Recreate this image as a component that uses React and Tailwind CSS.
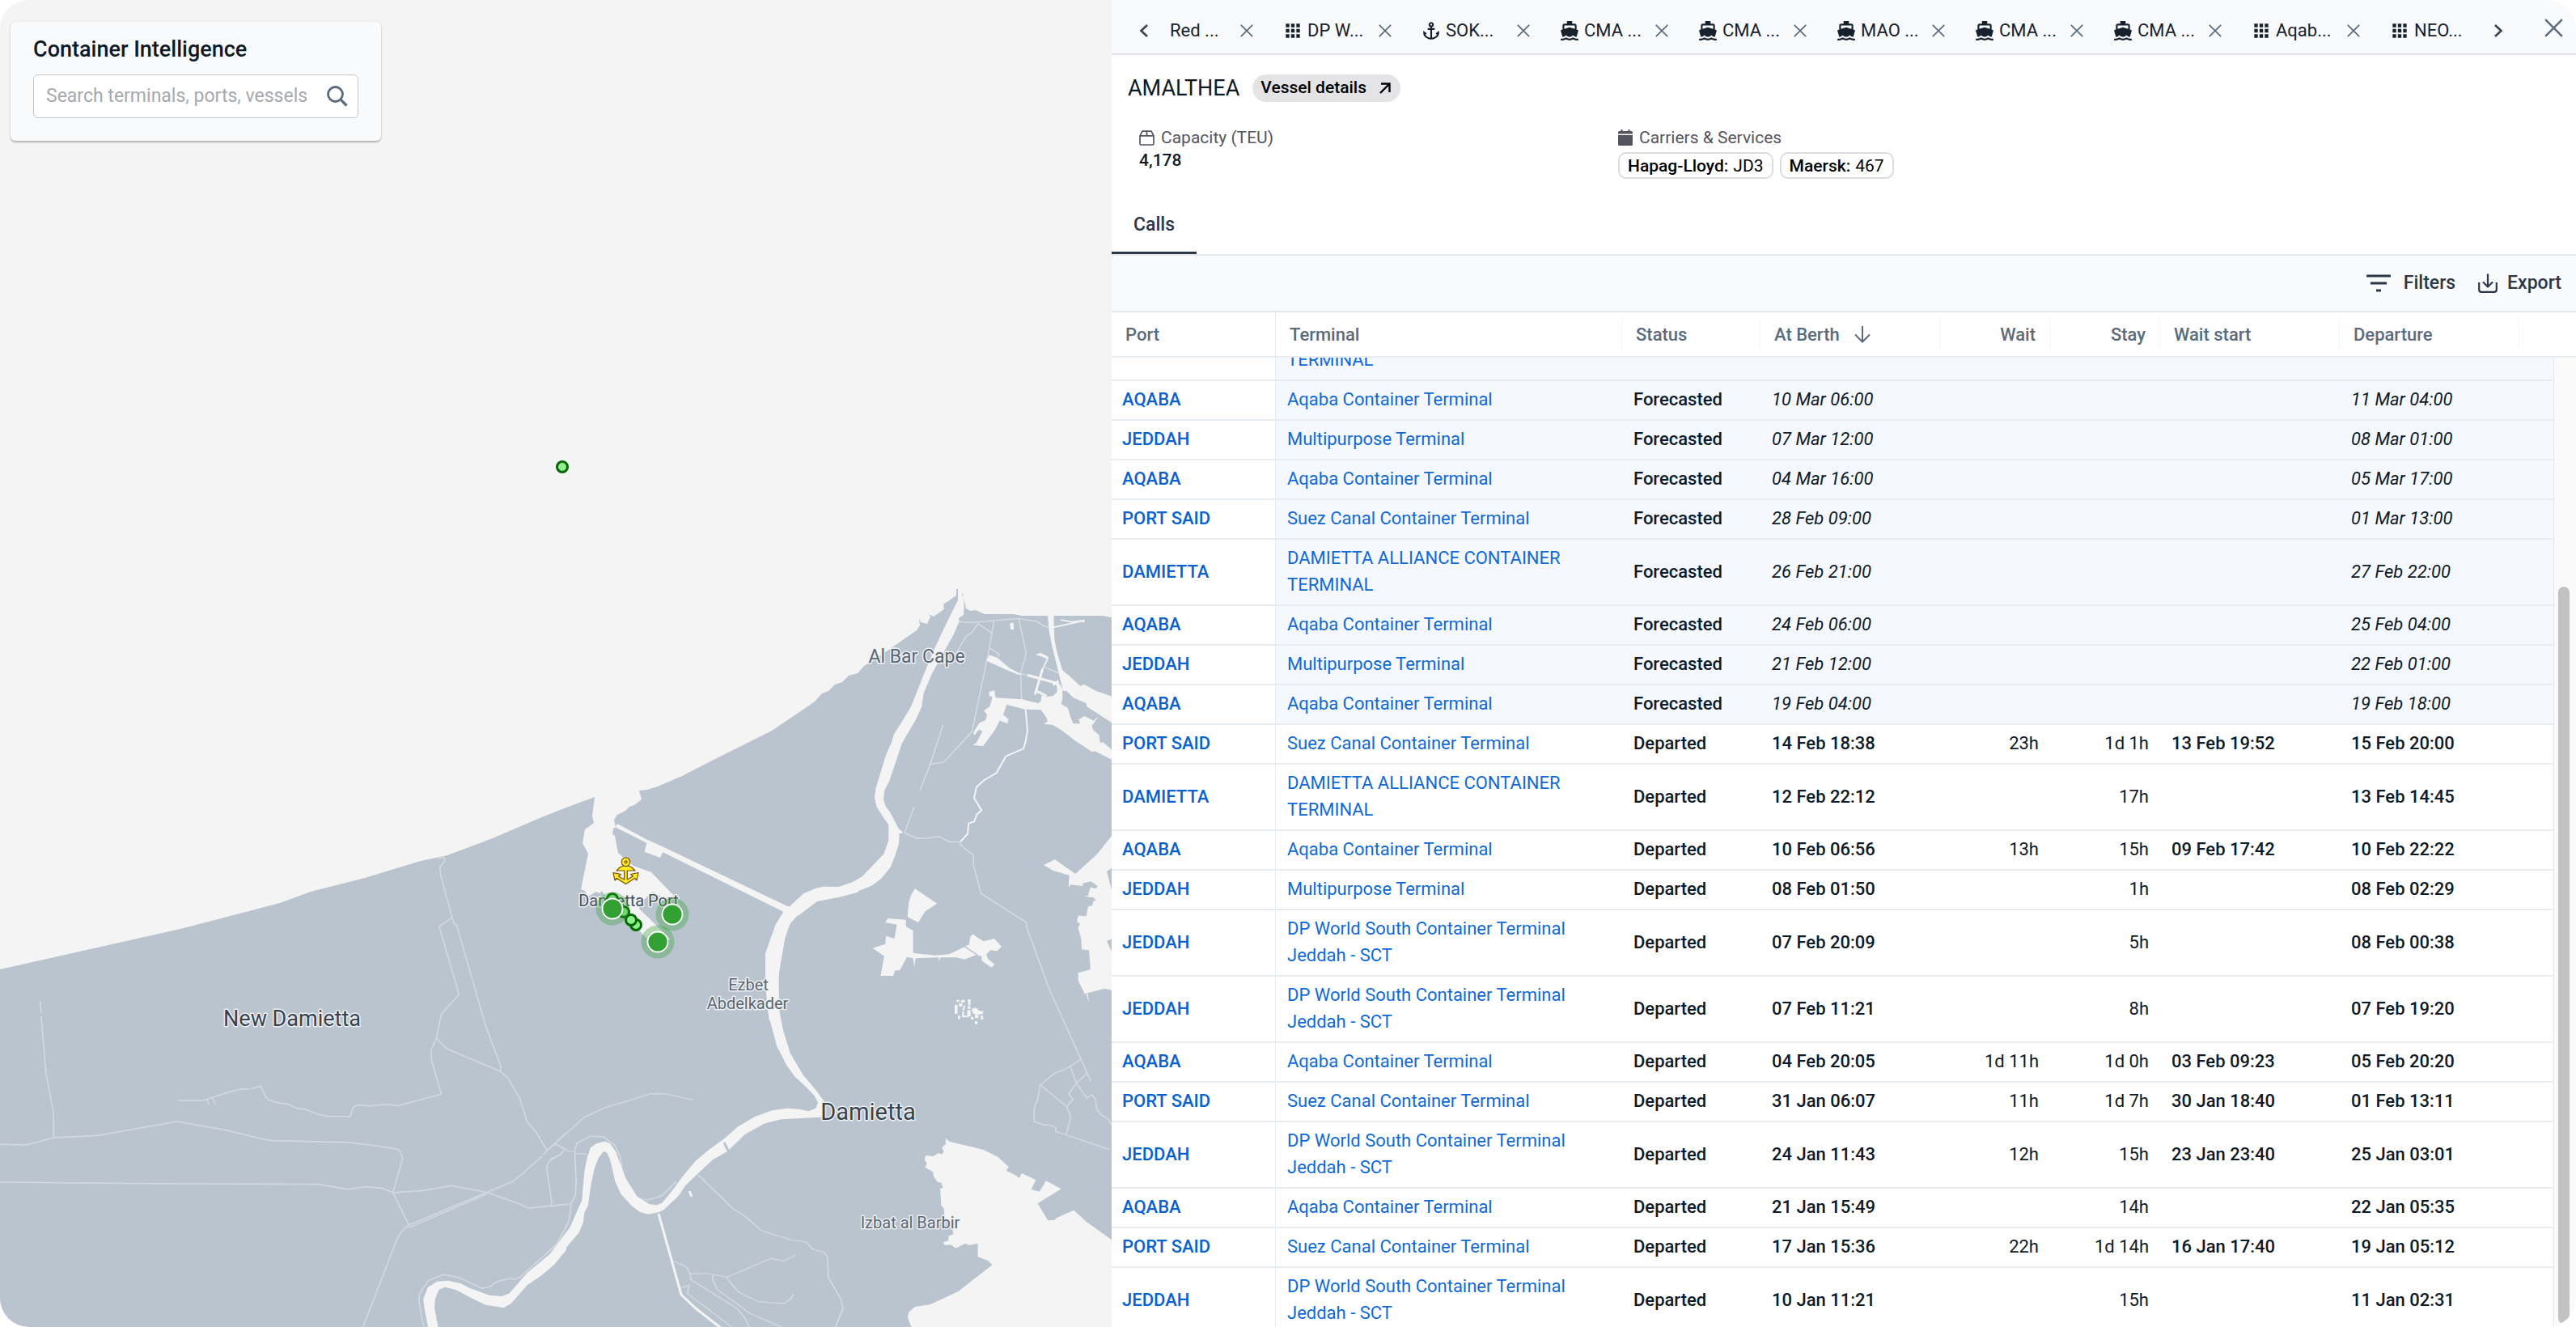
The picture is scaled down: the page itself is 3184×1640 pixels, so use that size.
import React, { useLayoutEffect, useRef, useState } from 'react';
import { MdApps, MdAnchor, MdDirectionsBoat } from 'react-icons/md';

const tabs = [
  { label: 'Red ...' },
  { label: 'DP W...', icon: 'terminal' },
  { label: 'SOK...', icon: 'port' },
  { label: 'CMA ...', icon: 'vessel' },
  { label: 'CMA ...', icon: 'vessel' },
  { label: 'MAO ...', icon: 'vessel' },
  { label: 'CMA ...', icon: 'vessel' },
  { label: 'CMA ...', icon: 'vessel' },
  { label: 'Aqab...', icon: 'terminal' },
  { label: 'NEO...', icon: 'terminal', last: true },
];

const tabIcons = { terminal: MdApps, port: MdAnchor, vessel: MdDirectionsBoat };

const ACT = 'Aqaba Container Terminal';
const MPT = 'Multipurpose Terminal';
const SCCT = 'Suez Canal Container Terminal';
const DACT = 'DAMIETTA ALLIANCE CONTAINER TERMINAL';
const SCT = 'DP World South Container Terminal Jeddah - SCT';

// port, terminal, status, at berth, wait, stay, wait start, departure
const calls = [
  ['', 'TERMINAL', '', '', '', '', '', ''],
  ['AQABA', ACT, 'Forecasted', '10 Mar 06:00', '', '', '', '11 Mar 04:00'],
  ['JEDDAH', MPT, 'Forecasted', '07 Mar 12:00', '', '', '', '08 Mar 01:00'],
  ['AQABA', ACT, 'Forecasted', '04 Mar 16:00', '', '', '', '05 Mar 17:00'],
  ['PORT SAID', SCCT, 'Forecasted', '28 Feb 09:00', '', '', '', '01 Mar 13:00'],
  ['DAMIETTA', DACT, 'Forecasted', '26 Feb 21:00', '', '', '', '27 Feb 22:00'],
  ['AQABA', ACT, 'Forecasted', '24 Feb 06:00', '', '', '', '25 Feb 04:00'],
  ['JEDDAH', MPT, 'Forecasted', '21 Feb 12:00', '', '', '', '22 Feb 01:00'],
  ['AQABA', ACT, 'Forecasted', '19 Feb 04:00', '', '', '', '19 Feb 18:00'],
  ['PORT SAID', SCCT, 'Departed', '14 Feb 18:38', '23h', '1d 1h', '13 Feb 19:52', '15 Feb 20:00'],
  ['DAMIETTA', DACT, 'Departed', '12 Feb 22:12', '', '17h', '', '13 Feb 14:45'],
  ['AQABA', ACT, 'Departed', '10 Feb 06:56', '13h', '15h', '09 Feb 17:42', '10 Feb 22:22'],
  ['JEDDAH', MPT, 'Departed', '08 Feb 01:50', '', '1h', '', '08 Feb 02:29'],
  ['JEDDAH', SCT, 'Departed', '07 Feb 20:09', '', '5h', '', '08 Feb 00:38'],
  ['JEDDAH', SCT, 'Departed', '07 Feb 11:21', '', '8h', '', '07 Feb 19:20'],
  ['AQABA', ACT, 'Departed', '04 Feb 20:05', '1d 11h', '1d 0h', '03 Feb 09:23', '05 Feb 20:20'],
  ['PORT SAID', SCCT, 'Departed', '31 Jan 06:07', '11h', '1d 7h', '30 Jan 18:40', '01 Feb 13:11'],
  ['JEDDAH', SCT, 'Departed', '24 Jan 11:43', '12h', '15h', '23 Jan 23:40', '25 Jan 03:01'],
  ['AQABA', ACT, 'Departed', '21 Jan 15:49', '', '14h', '', '22 Jan 05:35'],
  ['PORT SAID', SCCT, 'Departed', '17 Jan 15:36', '22h', '1d 14h', '16 Jan 17:40', '19 Jan 05:12'],
  ['JEDDAH', SCT, 'Departed', '10 Jan 11:21', '', '15h', '', '11 Jan 02:31'],
];

const Cross = ({ className }) => (
  <svg viewBox="0 0 16 16" className={className} fill="none" stroke="currentColor" strokeWidth="1.7">
    <path d="M0.8 0.8 L15.2 15.2 M15.2 0.8 L0.8 15.2" />
  </svg>
);

const Chevron = ({ flip }) => (
  <svg viewBox="0 0 12 18" className="w-3 h-[18px]" fill="none" stroke="currentColor" strokeWidth="2.6">
    <path d={flip ? 'M2 2 L9.5 9 L2 16' : 'M10 2 L2.5 9 L10 16'} />
  </svg>
);

const MapLabel = ({ x, y, size, color = '#5c6671', weight = 400, children }) => (
  <text x={x} y={y} fontSize={size} fill={color} fontWeight={weight} textAnchor="middle" stroke="#eef1f4" strokeWidth="3" strokeLinejoin="round" paintOrder="stroke">
    {children}
  </text>
);

const Berth = ({ x, y }) => (
  <g>
    <circle cx={x} cy={y} r="20.5" fill="#2f9e2f" opacity="0.33" />
    <circle cx={x} cy={y} r="12.5" fill="#33a033" stroke="#fff" strokeWidth="1.8" />
  </g>
);

const ShipDot = ({ x, y }) => (
  <circle cx={x} cy={y} r="6.5" fill="#90ee90" stroke="#006a00" strokeWidth="3" />
);

const MapView = () => (
  <svg viewBox="0 0 1374 1640" preserveAspectRatio="xMidYMid slice" className="block w-full h-full" fontFamily="Roboto, sans-serif" role="img" aria-label="Map of Damietta">
    <rect width="1374" height="1640" fill="#f4f4f4" />
    <path fill="#b9c4ce" d="M0 1198 L223 1148 L346 1116 L384 1102 L451 1085 L520 1064 L553 1057 L609 1036 L667 1011 L700 998 L735 985 L732 1008 L734 1017 L723 1025 L720 1042 L727 1055 L718 1099 L723 1101 L727 1108 L737 1102 L741 1104 L744 1101 L750 1110 L764 1123 L790 1150 L807 1167 L829 1161 L790 1123 L796 1112 L807 1102 L820 1110 L833 1107 L805 1078 L783 1070 L764 1054 L760 1033 L757 1031 L758 1024 L761 1022 L759 1013 L763 1007 L773 1002 L778 997 L784 995 L793 988 L790 977 L800 976 L813 972 L843 959 L880 940 L920 920 L954 903 L1000 872 L1007 867 L1016 857 L1024 854 L1032 846 L1041 843 L1049 835 L1060 832 L1068 823 L1080 816 L1110 795 L1133 779 L1137 773 L1136 765 L1138 769 L1146 771 L1150 762 L1148 759 L1154 762 L1167 753 L1166 747 L1182 736 L1182 728 L1184 728 L1184 742 L1190 733 L1194 752 L1200 755 L1206 754 L1217 759 L1253 759 L1263 761 L1295 761 L1363 761 L1374 763 L1374 1640 L0 1640 Z" />

    {/* south-west roads */}
    <g transform="translate(0 940) scale(0.4464)" fill="none" stroke="#d3d9e0" strokeWidth="3.6">
      <path d="M111 666 L114 698 M114 708 L127 862 L148 974 L149 1043" />
      <path d="M0 1062 L72 1064 L149 1044 L270 1038 L490 999 L630 1024 L720 1046 L752 1052 L965 1057 L1025 1064 L1100 1076 L1108 1083 L1115 1101 L1088 1196 L1132 1286 L1112 1303 L1098 1328 L1005 1568" />
      <path d="M0 1167 L410 1171 L886 1173 L960 1187 L1012 1180 L1055 1183 L1088 1196 L1167 1191 L1250 1177 L1347 1195 L1432 1225 L1464 1239 L1568 1228" />
      <path d="M1132 1286 L1420 1165 L1436 1153 L1500 1096 M1132 1293 L1347 1200 M1504 1090 L1568 1030 M1538 1062 L1568 1077" />
      <path d="M494 941 L562 941 L638 916 L668 909 L690 910 M694 909 L722 901 L736 931 L743 939 L767 947 L796 951 L825 963 L848 966 L880 979 L908 985 L970 985 L978 960 L988 954 L1025 956 L1073 951 L1101 956 L1222 923 L1195 830 L1193 804 L1208 768 L1222 702 L1271 647 L1216 459 L1252 435" />
      <path d="M573 937 L579 953 M588 933 L596 952" />
      <path d="M1213 271 L1228 267 L1232 277 L1218 295 L1220 318 L1257 452 L1264 455 L1345 735 L1387 848 L1386 861 L1407 880 L1440 937 L1459 999 L1485 1030 L1515 1080" />
      <path d="M1208 768 L1236 797 L1386 861" />
      <path d="M1560 1080 L1553 1090 L1527 1102 L1516 1118 L1514 1133 L1528 1222 L1525 1233" />
      <path d="M1568 1290 L1541 1340 L1440 1430 L1427 1436 L1407 1434 L1371 1445 L1358 1456 L1335 1461 L1267 1430 L1227 1423 L1187 1439 L1163 1473 L1160 1490 L1167 1540 L1174 1568" />
    </g>

    {/* south-east roads */}
    <g transform="translate(680 1140) scale(0.4464 0.3333)" fill="none" stroke="#d3d9e0" strokeWidth="4">
      <path d="M0 836 L95 722 L150 688 L278 635 L320 636 L396 658" />
      <path d="M15 822 L52 848 L68 849 L74 818 L113 792 L148 795 L180 828 L195 872 L198 920" />
      <path d="M68 849 L72 960 L70 1012 L58 1043 L0 1053 M68 856 L103 859 M0 882 L30 860 L37 845 M58 1043 L53 1105 L20 1190 L0 1213" />
      <path d="M255 1026 L272 1029 L310 1013 L350 960" />
      <path d="M410 936 L507 1062 L543 1092 L585 1143 L668 1177 L708 1185 L727 1211 L757 1223 L768 1240 L770 1315 L805 1397 L811 1432 L790 1500" />
      <path d="M340 1255 L378 1277 L388 1303 L435 1301 L490 1315 L612 1246 L648 1255 L680 1233" />
      <path d="M388 1303 L390 1325 L518 1432 L540 1468 L550 1500 M452 1306 L449 1322 L463 1361 L553 1450 L640 1500" />
      <path d="M487 1315 L522 1371 L578 1407 L648 1413 L665 1398 L675 1378 M360 1357 L385 1345 L380 1376 L503 1500" />
      <path d="M1318 0 L1320 20 L1382 248 L1470 508 L1497 588 M1470 508 L1422 547 L1400 557 L1357 602 L1350 655 L1340 690 L1340 738 L1365 750 L1378 750 L1400 760 L1400 775 L1550 843" />
      <path d="M1357 602 L1430 682 L1441 720 L1438 743 L1428 787 M1440 534 L1457 595 L1485 652 L1500 640 L1510 655 L1513 693 L1525 712 L1545 730 L1555 752 M1487 558 L1457 597 L1436 635 L1448 656 L1430 682" />
    </g>

    {/* north-east roads */}
    <g transform="translate(1000 700) scale(0.3333)" fill="none" stroke="#d9dfe5" strokeWidth="4">
      <path d="M555 204 L590 208 L627 206 L778 193 L845 204 L870 221 L890 226" />
      <path d="M627 212 L603 245 L582 260 L545 322 M627 212 L677 247 M686 203 L665 320 L604 613 L500 726 L450 733" />
      <path d="M778 193 L805 322 L785 398 L788 495 M785 398 L810 403 M668 302 L705 325 L700 337 M872 373 L925 395" />
      <path d="M497 587 L450 733 L412 830 M390 891 L354 988 L400 1008 L448 1007 L480 1001 L520 1021 L560 1022 L562 1034 L610 1071 L610 1108 L638 1213 L806 1320" />
      <path stroke="#f4f4f4" strokeWidth="6" d="M803 530 L810 608 L803 650 L795 676 L730 704 L695 766 L650 792 L621 818 L612 858 L640 905 L622 920 L613 946 L592 953 L588 992 L562 1020" />
    </g>

    {/* Nile */}
    <g fill="#f4f4f4">
      <path transform="translate(1000 700) scale(0.3333)" d="M552 125 L525 180 L500 230 L465 305 L430 390 L400 465 L378 520 L345 575 L315 622 L305 655 L285 700 L265 765 L247 825 L243 855 L250 890 L275 930 L295 958 L295 1015 L278 1065 L240 1105 L197 1150 L145 1180 L110 1190 L55 1187 L25 1193 L-2 1205 L-2 1258 L30 1240 L100 1225 L160 1213 L235 1183 L270 1155 L302 1115 L320 1070 L333 1030 L335 990 L350 988 L332 972 L300 910 L285 892 L276 865 L280 830 L298 795 L320 730 L345 655 L395 570 L418 520 L425 470 L455 400 L490 335 L535 255 L557 205 L555 192 L573 180 L575 150 L575 110 L556 100 Z" />
      <path transform="translate(640 940) scale(0.3333)" d="M1084 483 L1060 492 L1010 540 L1000 540 L540 320 L480 293 L370 235 L362 247 L478 305 L470 338 L528 360 L538 340 L985 560 L955 610 L940 660 L918 715 L918 830 L925 900 L932 962 L973 962 L967 900 L967 820 L972 750 L985 690 L990 655 L1010 605 L1050 560 L1084 535 Z" />
      <path transform="translate(640 940) scale(0.3333)" d="M1262 443 L1190 468 L1140 467 L1100 480 L1050 505 L1010 540 L1040 575 L1110 522 L1190 507 L1262 488 Z" />
      <path transform="translate(680 1140) scale(0.4464 0.3333)" d="M628 0 L610 60 L597 115 L597 200 L602 260 L608 360 L628 460 L655 530 L678 572 L705 605 L730 640 L742 668 L735 690 L715 700 L690 692 L655 689 L615 697 L567 720 L520 757 L482 802 L440 842 L402 885 L365 945 L335 1000 L310 1040 L295 1048 L275 1045 L240 1015 L210 950 L190 880 L182 850 L165 818 L150 812 L128 820 L112 835 L103 870 L95 920 L88 1030 L55 1130 L-2 1232 L-2 1284 L35 1220 L80 1150 L92 1110 L95 1075 L105 1050 L112 980 L122 915 L133 875 L148 848 L158 855 L166 880 L180 960 L195 1005 L225 1050 L248 1073 L272 1082 L300 1075 L315 1065 L355 1015 L375 975 L410 930 L450 880 L490 850 L540 785 L595 745 L640 730 L750 722 L765 690 L757 660 L735 620 L700 565 L665 485 L645 400 L635 330 L632 200 L650 60 L665 0 Z" />
      <path transform="translate(0 940) scale(0.4464)" d="M1568 1310 L1523 1366 L1500 1385 L1460 1418 L1410 1475 L1390 1483 L1355 1480 L1300 1460 L1275 1447 L1240 1440 L1210 1442 L1185 1458 L1172 1490 L1174 1510 L1185 1568 L1213 1568 L1203 1515 L1205 1490 L1215 1465 L1232 1458 L1262 1465 L1300 1485 L1345 1507 L1395 1515 L1415 1503 L1460 1452 L1500 1425 L1535 1395 L1568 1355 Z" />
    </g>
    <path d="M895 1412 L901 1424" stroke="#b9c4ce" strokeWidth="3" />
    <path d="M814 1500 L842 1600 L860 1617 L892 1642" fill="none" stroke="#f4f4f4" strokeWidth="3" />
    <path d="M852 1472 L855 1479" stroke="#f4f4f4" strokeWidth="3" />

    {/* lagoons around the cape */}
    <g transform="translate(1000 700) scale(0.3333)" fill="#f4f4f4">
      <path d="M885 178 L907 178 L910 270 L920 320 L940 385 L970 410 L1005 443 L1020 437 L1065 462 L1124 482 L1124 580 L1030 520 L1028 508 L980 487 L955 462 L942 462 L932 420 L912 340 L900 290 L890 240 Z" />
      <path d="M668 465 L688 460 L692 487 L790 493 L850 507 L860 500 L862 478 L885 483 L905 480 L920 465 L920 450 L912 425 L925 430 L940 455 L940 490 L935 510 L960 525 L968 555 L980 583 L1005 583 L1000 567 L1022 555 L1055 572 L1075 555 L1048 592 L1055 608 L1075 625 L1080 655 L1090 652 L1124 680 L1124 717 L1060 685 L1050 688 L985 645 L940 610 L905 588 L870 584 L885 575 L880 560 L860 532 L800 530 L733 512 L720 550 L740 567 L735 582 L707 572 L690 605 L645 667 L607 662 L620 655 L643 612 L630 605 L612 627 L610 615 L632 580 L655 570 L660 550 L648 535 L670 520 L680 485 L668 480 Z" />
      <path d="M668 328 L700 340 L745 378 L785 398 L780 403 L735 385 L658 350 Z" />
      <path d="M744 212 L758 208 L760 234 L748 234 Z M840 328 L858 320 L888 335 L885 345 L865 335 Z" />
      <path d="M905 226 L1016 202 M932 198 L975 206 L1020 200 L1018 208 M886 340 L865 382" stroke="#f4f4f4" strokeWidth="5" fill="none" />
      <path d="M866 380 L838 475 M810 403 L918 433 M840 460 L880 480 M905 440 L925 425" stroke="#f4f4f4" strokeWidth="9" fill="none" />
      <path d="M870 1107 L912 1087 L988 1140 L1010 1120 L1070 1065 L1124 997 L1124 1322 L995 1322 L995 1305 L1000 1295 L1028 1298 L1035 1262 L1050 1258 L1055 1240 L1065 1240 L1055 1228 L1020 1223 L1035 1220 L1043 1190 L1065 1195 L1070 1185 L1045 1168 L1015 1175 L1015 1185 L970 1180 L962 1192 L965 1145 L905 1128 Z" />
      <path d="M393 1195 L475 1250 L430 1280 L405 1320 L365 1300 L370 1245 L380 1215 Z" />
    </g>
    <path d="M1368 1077 L1374 1073 L1374 1100 Z" fill="#b9c4ce" />

    {/* fish farms and southern lake */}
    <g transform="translate(680 1140) scale(0.4464 0.3333)" fill="#f4f4f4">
      <path d="M928 0 L935 -15 L985 -10 L985 15 L1005 30 L1005 113 L1065 122 L1105 118 L1145 92 L1160 82 L1163 55 L1170 43 L1185 58 L1200 70 L1230 60 L1250 90 L1238 106 L1220 103 L1208 118 L1212 135 L1231 156 L1222 167 L1195 142 L1195 125 L1180 120 L1148 137 L1125 130 L1080 130 L1078 145 L1075 130 L1012 133 L1008 165 L1005 133 L988 128 L968 178 L955 178 L950 198 L915 198 L925 125 L893 95 L928 80 L930 50 L953 60 L960 8 Z" />
      <path d="M1146 88 L1182 120" stroke="#b9c4ce" strokeWidth="4" />
      <path d="M1470 -5 L1462 20 L1470 60 L1472 100 L1492 103 L1496 175 L1462 187 L1462 215 L1480 265 L1535 245 L1556 252 L1556 -5 Z M1485 265 L1492 300 L1489 265 Z" />
      <path d="M1541 68 L1556 62 L1556 112 Z" fill="#b9c4ce" />
      <path d="M1095 800 L1105 812 L1155 828 L1200 843 L1240 870 L1270 907 L1263 920 L1290 938 L1298 948 L1306 930 L1345 955 L1332 990 L1355 998 L1373 958 L1415 988 L1350 1042 L1378 1105 L1397 1103 L1403 1095 L1450 1067 L1485 1110 L1556 1178 L1556 1500 L1000 1500 L990 1465 L993 1445 L1010 1425 L1052 1417 L1130 1368 L1224 1270 L1213 1255 L1184 1240 L1184 1190 L1160 1197 L1150 1190 L1123 1208 L1110 1195 L1093 1197 L1088 1186 L1103 1180 L1103 1163 L1117 1155 L1110 1120 L1093 1100 L1090 1060 L1083 1050 L1080 987 L1088 983 L1083 965 L1073 963 L1062 943 L1060 925 L1038 908 L1043 895 L1037 878 L1040 863 L1060 868 L1075 855 L1085 860 L1090 850 L1085 835 L1095 822 Z" />
      <path d="M1125 287 h8 v8 h-8 Z M1138 287 h10 v10 h-10 Z M1156 285 h8 v22 h-6 Z M1120 305 h8 v34 h-8 Z M1132 300 h9 v12 h-9 Z M1145 308 l5 0 l-4 18 l-5 0 Z M1156 310 h8 v10 h-8 Z M1128 346 h7 v13 h-5 Z M1141 330 l5 0 l0 16 l12 0 l0 6 l-18 0 Z M1155 325 h9 v24 h-9 Z M1167 320 l12 -4 l9 12 l12 2 l-2 10 l-20 2 l-8 -6 Z M1165 350 h7 v10 h-7 Z M1176 343 h10 v12 h-10 Z M1192 346 h7 v14 h-6 Z M1176 366 h7 v11 h-7 Z" />
    </g>

    <MapLabel x={1133} y={819} size={23}>Al Bar Cape</MapLabel>
    <MapLabel x={361} y={1268} size={27} color="#36434f">New Damietta</MapLabel>
    <MapLabel x={1073} y={1384} size={29} color="#36434f">Damietta</MapLabel>
    <MapLabel x={925} y={1224} size={20}>Ezbet</MapLabel>
    <MapLabel x={924} y={1247} size={20}>Abdelkader</MapLabel>
    <MapLabel x={1125} y={1518} size={20}>Izbat al Barbir</MapLabel>
    <MapLabel x={777} y={1120} size={20} color="#46525d">Damietta Port</MapLabel>

    <ShipDot x={695} y={577} />
    <ShipDot x={757} y={1111} />
    <ShipDot x={771} y={1127} />
    <ShipDot x={786} y={1143} />
    <ShipDot x={780} y={1137} />
    <Berth x={757} y={1123} />
    <Berth x={831} y={1130} />
    <Berth x={813} y={1164} />

    {/* anchorage */}
    <g transform="translate(757 1059)" fill="#ffee22" stroke="#7a4a00" strokeWidth="1.2" strokeLinejoin="round">
      <path d="M14.800 10.500 L18.200 10.500 L24 13 L28 17 L18.300 17 L18.300 28 L25.500 24 L22.500 21.500 L32 19.500 L30 29 L27.800 26.300 L16.500 33.500 L5.200 26.300 L3 29 L1 19.500 L10.500 21.500 L7.500 24 L14.700 28 L14.700 17 L5 17 L9 13 Z" />
      <path fillRule="evenodd" d="M16.500 1 A5.300 5.300 0 1 1 16.400 1 Z M16.500 4.800 A1.500 1.500 0 1 0 16.600 4.800 Z" />
    </g>
  </svg>
);

const SearchCard = () => (
  <section className="absolute top-[27px] left-[13px] w-[458px] h-[147px] rounded-md bg-[#f9fafc] px-7 pt-[18px] shadow-[0_2px_2px_rgba(0,0,0,0.25),0_0_3px_rgba(0,0,0,0.08)]">
    <h1 className="text-[27px] leading-8 font-medium text-[#0e1a26]">Container Intelligence</h1>
    <label className="mt-[15px] flex items-center h-[54px] rounded-md border border-[#c4c6c8] bg-white pl-[15px] pr-3">
      <input type="text" aria-label="Search" placeholder="Search terminals, ports, vessels" className="flex-1 min-w-0 outline-none text-[23px] text-[#0e1a26] placeholder:text-[#a6a9ad]" />
      <svg viewBox="0 0 26 26" className="w-[26px] h-[26px] text-[#5b6b7c]" fill="none" stroke="currentColor" strokeWidth="2.8">
        <circle cx="10.500" cy="10.500" r="9" />
        <path d="M16.800 16.800 L24.500 24.500" strokeWidth="3.2" />
      </svg>
    </label>
  </section>
);

const TabStrip = () => (
  <div className="flex items-center h-[68px] pt-2.5 border-b-2 border-[#e0e4e8] bg-[#f9fafc] text-[#16212d]">
    <button aria-label="Previous tabs" className="w-[72px] pl-[34px] text-[#37434f]"><Chevron /></button>
    <div className="flex flex-1 min-w-0 overflow-hidden">
      {tabs.map((t, i) => {
        const Icon = tabIcons[t.icon];
        return (
          <div key={i} className={`flex shrink-0 items-center pr-9 ${Icon ? 'w-[171px]' : 'w-[139px]'}`}>
            {Icon && <Icon className="w-[26px] h-[26px] mr-[5px] shrink-0" />}
            <button className="flex-1 text-left text-[22px] leading-8 whitespace-nowrap">{t.label}</button>
            {!t.last && <button aria-label="Close tab" className="text-[#5b6b7c]"><Cross className="w-4 h-4" /></button>}
          </div>
        );
      })}
    </div>
    <button aria-label="Next tabs" className="w-16 pl-px text-[#37434f]"><Chevron flip /></button>
    <button aria-label="Close panel" className="self-start pr-4 text-[#5b6b7c]"><Cross className="w-[23px] h-[23px] mt-[13px]" /></button>
  </div>
);

const VesselHeader = () => (
  <header className="pt-6 pb-5">
    <div className="flex items-center gap-4 pl-5">
      <h2 className="text-[27px] leading-[34px] text-[#0e1a26]">AMALTHEA</h2>
      <a href="#vessel" className="flex items-center gap-4 h-[34px] rounded-full bg-[#e4e4e6] pl-2.5 pr-3 text-[21px] font-medium text-black">
        Vessel details
        <svg viewBox="0 0 14 14" className="w-3.5 h-3.5" fill="none" stroke="currentColor" strokeWidth="2.4">
          <path d="M2 1.500 H12.500 V12 M12.500 1.500 L1 13" />
        </svg>
      </a>
    </div>
    <dl className="mt-[30px] ml-[34px] grid grid-cols-3 text-[21px] leading-7">
      <div>
        <dt className="flex items-center gap-2 text-[#55555f]">
          <svg viewBox="0 0 19 19" className="w-[19px] h-[19px]" fill="none" stroke="currentColor" strokeWidth="1.7">
            <path d="M1 6.800 L4 1.200 H15 L18 6.800 V16.500 Q18 18 16.500 18 H2.500 Q1 18 1 16.500 Z M1 6.800 H18 M9.500 1.200 V6.800" />
          </svg>
          Capacity (TEU)
        </dt>
        <dd className="font-medium text-[#0e1a26]">4,178</dd>
      </div>
      <div>
        <dt className="flex items-center gap-2 text-[#55555f]">
          <svg viewBox="0 0 18 20" className="w-[18px] h-5" fill="currentColor">
            <path d="M3.500 0 H5.500 V2 H12.500 V0 H14.500 V2 H16.500 Q18 2 18 3.500 V5.500 H0 V3.500 Q0 2 1.500 2 H3.500 Z M0 7 H18 V18.500 Q18 20 16.500 20 H1.500 Q0 20 0 18.500 Z" />
          </svg>
          Carriers &amp; Services
        </dt>
        <dd className="mt-1 flex gap-2 text-black">
          {[['Hapag-Lloyd:', 'JD3'], ['Maersk:', '467']].map(([name, code]) => (
            <span key={name} className="flex items-center gap-1.5 h-[33px] px-2.5 rounded-[10px] border-2 border-[#dcdcdf]">
              <b className="font-medium">{name}</b>{code}
            </span>
          ))}
        </dd>
      </div>
    </dl>
  </header>
);

const columns = [
  { label: 'Port', width: 'w-[203px]' },
  { label: 'Terminal', width: 'w-[428px]' },
  { label: 'Status', width: 'w-[171px]' },
  { label: 'At Berth', width: 'w-[222px]', sorted: true },
  { label: 'Wait', width: 'w-[136px]', right: true },
  { label: 'Stay', width: 'w-[136px]', right: true },
  { label: 'Wait start', width: 'w-[222px]' },
  { label: 'Departure', width: 'w-[222px]' },
];

const CallsTable = () => {
  const scroller = useRef(null);

  // the first row is half scrolled out under the header
  useLayoutEffect(() => {
    scroller.current.scrollTop = 20;
  }, []);

  return (
    <div className="flex flex-1 min-h-0">
      <div ref={scroller} className="flex-1 min-w-0 overflow-y-auto overflow-x-hidden [scrollbar-width:none]">
        <table className="w-full table-fixed border-separate border-spacing-0 text-[22px] leading-[33px] text-[#0e1a26]">
          <thead className="sticky top-0">
            <tr>
              {columns.map((c, i) => (
                <th key={c.label} scope="col" className={`${c.width} h-14 p-0 bg-white border-b-2 border-[#e8edf1] font-medium text-[#5b6b7c] ${i === 0 ? 'border-r border-r-[#e3e8ec]' : ''}`}>
                  <div className={`flex items-center h-10 px-[17px] ${c.right ? 'justify-end' : ''} ${i > 0 ? 'border-r border-[#f5f6f8]' : ''}`}>
                    {c.label}
                    {c.sorted && (
                      <svg viewBox="0 0 20 22" className="w-5 h-[22px] ml-[18px]" fill="none" stroke="currentColor" strokeWidth="2">
                        <path d="M10 1 V20 M1 11.500 L10 20.500 L19 11.500" />
                      </svg>
                    )}
                  </div>
                </th>
              ))}
              <th className="p-0 bg-white border-b-2 border-[#e8edf1]" />
            </tr>
          </thead>
          <tbody>
            {calls.map(([port, terminal, status, berth, wait, stay, waitStart, departure], i) => {
              const forecast = status !== 'Departed';
              const cell = `px-[14px] pt-1.5 pb-2 border-b-2 border-[#e8edf1] ${forecast ? 'bg-[#f5f8fe]' : 'bg-white'}`;
              const date = forecast ? 'italic' : 'font-medium';
              return (
                <tr key={i}>
                  <td className="px-[13px] pt-1.5 pb-2 bg-white border-b-2 border-r border-[#e8edf1]">
                    {port && <a href="#port" className="font-medium text-[#0a62cf]">{port}</a>}
                  </td>
                  <td className={cell}><a href="#terminal" className="block w-[370px] text-[#0f6ad8]">{terminal}</a></td>
                  <td className={`${cell} font-medium`}>{status}</td>
                  <td className={`${cell} ${date}`}>{berth}</td>
                  <td className={`${cell} text-right`}>{wait}</td>
                  <td className={`${cell} text-right`}>{stay}</td>
                  <td className={`${cell} ${date}`}>{waitStart}</td>
                  <td className={`${cell} ${date}`}>{departure}</td>
                  <td className={cell} />
                </tr>
              );
            })}
          </tbody>
        </table>
      </div>
      <div className="w-7 flex flex-col">
        <div className="h-14 border-b-2 border-[#e8edf1]" />
        <div className="flex-1 flex flex-col pl-[5px] pb-1 border-l border-[#e8e8e8] bg-[#fafafa]">
          <div className="mt-[283px] flex-1 w-3.5 rounded-full bg-[#c2c2c2]" />
        </div>
      </div>
    </div>
  );
};

const App = () => {
  const [tab, setTab] = useState('Calls');

  return (
    <div className="h-screen bg-white">
      <main className="grid grid-cols-[1374fr_1810fr] h-full rounded-[36px] overflow-hidden font-[Roboto,sans-serif]">
        <div className="relative min-w-0 min-h-0 overflow-hidden">
          <MapView />
          <SearchCard />
        </div>
        <aside className="flex flex-col min-w-0 min-h-0 bg-white">
          <TabStrip />
          <VesselHeader />
          <nav className="h-[75px] border-b-2 border-[#e6e9eb]">
            <button onClick={() => setTab('Calls')} className={`h-[73px] pt-1 px-[27px] border-b-[3px] text-[23px] font-medium text-[#2c3747] ${tab === 'Calls' ? 'border-[#2c3747]' : 'border-transparent'}`}>
              Calls
            </button>
          </nav>
          <div className="flex items-center justify-end gap-7 h-[70px] pr-[18px] border-b-2 border-[#e6e9eb] bg-[#f9fafc] text-[23px] font-medium text-[#2c3747]">
            <button className="flex items-center gap-4">
              <svg viewBox="0 0 30 22" className="w-[30px] h-[22px]" stroke="currentColor" strokeWidth="3">
                <path d="M0 2 H30 M5 11 H25 M12 20 H18" />
              </svg>
              Filters
            </button>
            <button className="flex items-center gap-3">
              <svg viewBox="0 0 24 24" className="w-6 h-6" fill="none" stroke="currentColor" strokeWidth="2.2">
                <path d="M12 0.500 V16 M6 10.500 L12 16.500 L18 10.500 M1.200 11 V20 Q1.200 22.800 4 22.800 H20 Q22.800 22.800 22.800 20 V11" />
              </svg>
              Export
            </button>
          </div>
          <CallsTable />
        </aside>
      </main>
    </div>
  );
};

export default App;
